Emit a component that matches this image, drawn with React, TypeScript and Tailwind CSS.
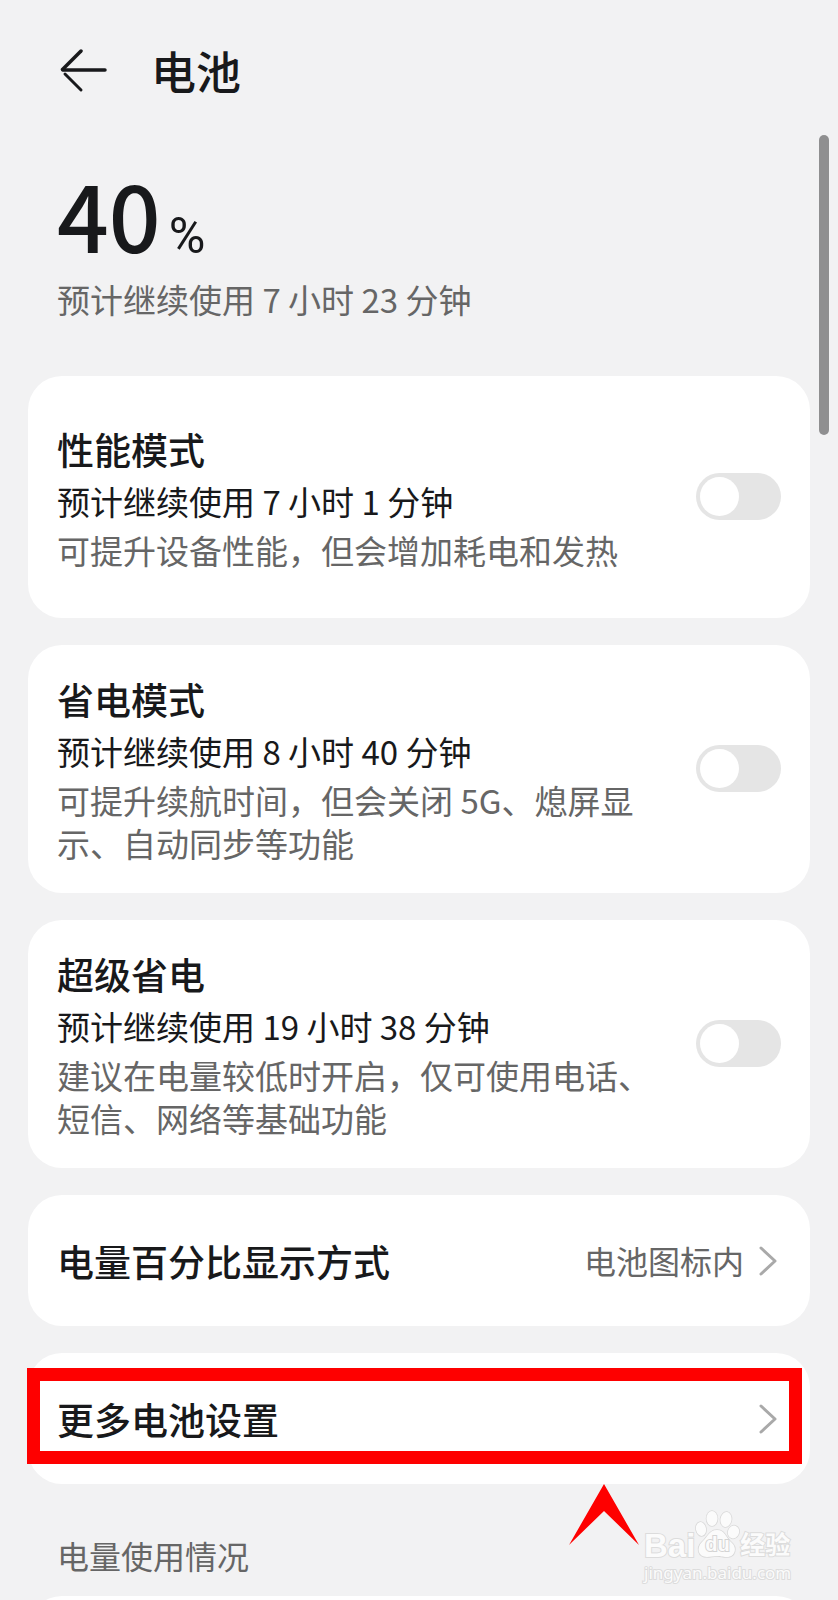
import React, { useState } from "react";

type Mode = {
  id: string;
  title: string;
  estimate: string;
  description: string;
};

const modes: Mode[] = [
  {
    id: "performance",
    title: "性能模式",
    estimate: "预计继续使用 7 小时 1 分钟",
    description: "可提升设备性能，但会增加耗电和发热",
  },
  {
    id: "saver",
    title: "省电模式",
    estimate: "预计继续使用 8 小时 40 分钟",
    description: "可提升续航时间，但会关闭 5G、熄屏显示、自动同步等功能",
  },
  {
    id: "ultra",
    title: "超级省电",
    estimate: "预计继续使用 19 小时 38 分钟",
    description: "建议在电量较低时开启，仅可使用电话、短信、网络等基础功能",
  },
];

function ModeCard({ mode }: { mode: Mode }) {
  const [on, setOn] = useState(false);
  return (
    <label
      htmlFor={mode.id}
      className="flex min-h-[242px] items-center gap-[39px] rounded-[34px] bg-white px-[29px] pt-[26px] pb-[28px]"
    >
      <span className="min-w-0 flex-1">
        <span className="block text-[37px] leading-[56px] font-medium text-[#18191b]">{mode.title}</span>
        <span className="block text-[33px] leading-[49px] text-[#18191b]">{mode.estimate}</span>
        <span className="mt-[3px] block text-[33px] leading-[43px] text-[#666666]">{mode.description}</span>
      </span>
      <input
        id={mode.id}
        type="checkbox"
        role="switch"
        checked={on}
        onChange={(e) => setOn(e.target.checked)}
        className="flex h-[47px] w-[85px] shrink-0 appearance-none items-center rounded-full bg-[#e5e5e5] px-1 before:block before:size-[39px] before:rounded-full before:bg-white checked:justify-end checked:bg-blue-500"
      />
    </label>
  );
}

function Chevron() {
  return (
    <svg className="h-[30px] w-[18px] shrink-0" viewBox="0 0 18 30" fill="none" aria-hidden="true">
      <path d="M2 2 L16 15 L2 28" stroke="#a9a9a9" strokeWidth="3" strokeLinecap="round" strokeLinejoin="round" />
    </svg>
  );
}

function LinkCard({ title, value }: { title: string; value?: string }) {
  return (
    <a
      href="#"
      className="flex min-h-[131px] items-center justify-between rounded-[34px] bg-white pr-[33px] pl-[29px]"
    >
      <span className="text-[37px] leading-[56px] font-medium text-[#18191b]">{title}</span>
      <span className="flex items-center gap-[15px]">
        {value && <span className="text-[32px] leading-[49px] text-[#666666]">{value}</span>}
        <Chevron />
      </span>
    </a>
  );
}

function Watermark() {
  return (
    <div className="absolute right-[44px] bottom-[16px] w-[150px] text-[#fbfbfb] [paint-order:stroke_fill] [-webkit-text-stroke:2px_#dcdcdc]">
      <div className="flex h-[52px] items-end">
        <span className="font-['Liberation_Sans'] text-[33px] leading-[33px] font-bold">Bai</span>
        <span className="relative self-start">
          <svg className="h-[48px] w-[45px]" viewBox="0 0 45 48" fill="#fbfbfb" stroke="#d8d8d8" strokeWidth="1.5" aria-hidden="true">
            <ellipse cx="6" cy="19" rx="5" ry="7" transform="rotate(-12 6 19)" />
            <ellipse cx="17" cy="8.500" rx="5.500" ry="7.500" />
            <ellipse cx="31" cy="9.500" rx="5.500" ry="7.500" transform="rotate(8 31 9.500)" />
            <ellipse cx="38.500" cy="22" rx="5.500" ry="6.500" transform="rotate(20 38.500 22)" />
            <path d="M22 20 C30 20 31 28 36 32 C43 38 40 47 32 47 C27 47 26 46 22 46 C18 46 16 47 12 47 C3 47 1 38 7 32 C12 28 14 20 22 20 Z" />
          </svg>
          <span className="absolute bottom-1 left-[10px] font-['Liberation_Sans'] text-[20px] leading-[20px] font-bold [-webkit-text-stroke:2px_#d4d4d4]">
            du
          </span>
        </span>
        <span className="mb-[6px] text-[25px] leading-[25px] font-bold">经验</span>
      </div>
      <div className="font-['Noto_Sans'] text-[17px] leading-[22px]">jingyan.baidu.com</div>
    </div>
  );
}

export default function App() {
  return (
    <div
      lang="zh-CN"
      className="relative h-screen overflow-hidden bg-[#f2f2f3] font-['Noto_Sans_CJK_SC',sans-serif]"
    >
      <header className="flex items-center gap-[44px] px-[60px] pt-[38px]">
        <button type="button" aria-label="返回" className="h-[44px] w-[47px]">
          <svg viewBox="0 0 47 44" fill="none" stroke="#18191b" strokeLinecap="round" aria-hidden="true">
            <path d="M3 21 H45" strokeWidth="3.500" />
            <path d="M21 2 L2.500 20.500" strokeWidth="3.500" />
            <path d="M5 25 L21 41" strokeWidth="3" />
          </svg>
        </button>
        <h1 className="text-[45px] leading-[66px] font-medium text-[#18191b]">电池</h1>
      </header>

      <section className="px-[57px] pt-[61px] text-[#18191b]">
        <p className="flex h-[96px] items-baseline gap-[8px]">
          <span className="text-[91px] leading-[96px] font-medium">40</span>
          <span className="font-['Roboto'] text-[50px] leading-[50px]">%</span>
        </p>
        <p className="mt-[14px] text-[33px] leading-[49px] text-[#666666]">预计继续使用 7 小时 23 分钟</p>
      </section>

      <main className="flex flex-col gap-[27px] px-[28px] pt-[52px]">
        {modes.map((mode) => (
          <ModeCard key={mode.id} mode={mode} />
        ))}
        <LinkCard title="电量百分比显示方式" value="电池图标内" />
        <div className="relative">
          <LinkCard title="更多电池设置" />
          <div className="pointer-events-none absolute top-[15px] right-[8px] bottom-[20px] -left-px border-[13px] border-[#fe0000]" />
          <svg
            className="absolute top-full right-[171px] h-[61px] w-[70px]"
            viewBox="0 0 70 61"
            fill="#fe0000"
            aria-hidden="true"
          >
            <path d="M35 0 L70 61 L35 27 L0 61 Z" />
          </svg>
        </div>
      </main>

      <h2 className="px-[57px] pt-[47px] text-[32px] leading-[49px] text-[#666666]">电量使用情况</h2>
      <div className="mx-[28px] mt-[16px] h-[131px] rounded-[34px] bg-white" />

      <div className="absolute top-[135px] right-[9px] h-[300px] w-[10px] rounded-full bg-[#8f8f90]" />
      <Watermark />
    </div>
  );
}
